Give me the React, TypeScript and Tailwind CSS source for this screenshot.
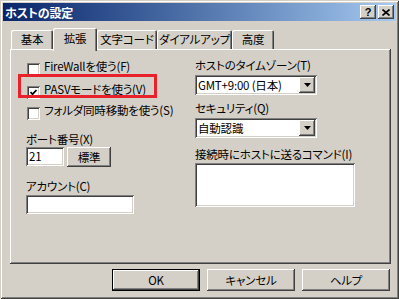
import React from "react";

const sunken =
  "bg-white shadow-[inset_1px_1px_0_#808080,inset_-1px_-1px_0_#fff,inset_2px_2px_0_#404040,inset_-2px_-2px_0_#d4d0c8]";
const raised =
  "bg-[#d4d0c8] shadow-[inset_-1px_-1px_0_#404040,inset_1px_1px_0_#fff,inset_-2px_-2px_0_#808080,inset_2px_2px_0_#d4d0c8]";

function Checkbox({ checked, label }: { checked?: boolean; label: string }) {
  return (
    <div className="flex items-start h-[13px] gap-[4px] ml-[1px]">
      <span className={`w-[13px] h-[13px] shrink-0 flex items-center justify-center ${sunken}`}>
        {checked && (
          <svg width="7" height="7" viewBox="0 0 7 7">
            <path d="M0.5 3 L2.5 5.2 L6.5 1" fill="none" stroke="#000" strokeWidth="1.7" />
          </svg>
        )}
      </span>
      <span className="-mt-[3px] whitespace-nowrap">{label}</span>
    </div>
  );
}

function Combo({ value }: { value: string }) {
  return (
    <div className={`w-[122px] h-[20px] flex items-center pl-[3px] pr-[2px] ${sunken}`}>
      <span className="flex-1 whitespace-nowrap">{value}</span>
      <span className={`w-[16px] h-[16px] flex items-center justify-center ${raised}`}>
        <svg width="7" height="4" viewBox="0 0 7 4">
          <path d="M0 0 H7 L3.5 4 Z" fill="#000" />
        </svg>
      </span>
    </div>
  );
}

function Button({ label, primary }: { label: string; primary?: boolean }) {
  if (primary) {
    return (
      <div className="w-[88px] h-[22px] border border-black flex">
        <div className={`flex-1 flex items-center justify-center ${raised}`}>{label}</div>
      </div>
    );
  }
  return (
    <div className={`w-[88px] h-[22px] flex items-center justify-center ${raised}`}>{label}</div>
  );
}

const tabs = [
  { label: "基本", w: "w-[42px]" },
  { label: "拡張", w: "w-[44px]", active: true },
  { label: "文字コード", w: "w-[60px]" },
  { label: "ダイアルアップ", w: "w-[75px]" },
  { label: "高度", w: "w-[42px]" },
];

export default function App() {
  return (
    <div className="w-[399px] h-[299px] p-[3px] bg-[#d4d0c8] flex flex-col text-black text-[11.5px] leading-[13px] tracking-[-0.2px] font-['Noto_Sans_CJK_JP',sans-serif] [font-feature-settings:'palt'] shadow-[inset_1px_1px_0_#d4d0c8,inset_-1px_-1px_0_#404040,inset_2px_2px_0_#fff,inset_-2px_-2px_0_#808080]">
      {/* title bar */}
      <div className="h-[18px] flex items-center bg-gradient-to-r from-[#0a246a] to-[#a6caf0] pl-[2px] pr-[2px]">
        <span className="text-white font-bold text-[12px]">ホストの設定</span>
        <div className="ml-auto flex gap-[2px]">
          <span className={`w-[16px] h-[14px] flex items-center justify-center font-bold text-[11px] font-['Liberation_Sans',sans-serif] ${raised}`}>
            ?
          </span>
          <span className={`w-[16px] h-[14px] flex items-center justify-center ${raised}`}>
            <svg width="8" height="7" viewBox="0 0 8 7">
              <path d="M0.5 0.5 L7.5 6.5 M7.5 0.5 L0.5 6.5" stroke="#000" strokeWidth="1.6" />
            </svg>
          </span>
        </div>
      </div>

      <div className="flex flex-col pl-[7px] pr-[5px] pt-[7px]">
        {/* tabs */}
        <div className="flex items-end h-[21px] pl-[1px]">
          {tabs.map((t) => (
            <div
              key={t.label}
              className={`${t.w} shrink-0 whitespace-nowrap flex items-center justify-center bg-[#d4d0c8] rounded-t-[2px] shadow-[inset_1px_1px_0_#fff,inset_-1px_0_0_#404040,inset_-2px_0_0_#808080] ${
                t.active ? "h-[23px] -mb-[2px] relative z-10 pb-[3px]" : "h-[19px]"
              }`}
            >
              {t.label}
            </div>
          ))}
        </div>

        {/* panel */}
        <div className="relative h-[215px] flex pl-[16px] shadow-[inset_-1px_-1px_0_#404040,inset_1px_1px_0_#fff,inset_-2px_-2px_0_#808080]">
          <div className="w-[169px] flex flex-col pt-[14px]">
            <Checkbox label="FireWallを使う(F)" />
            <div className="mt-[10px]">
              <Checkbox checked label="PASVモードを使う(V)" />
            </div>
            <div className="mt-[8px]">
              <Checkbox label="フォルダ同時移動を使う(S)" />
            </div>
            <div className="mt-[13px]">ポート番号(X)</div>
            <div className="mt-[1px] flex gap-[3px] h-[20px]">
              <div className={`w-[38px] h-[19px] flex items-center pl-[3px] ${sunken}`}>21</div>
              <div className={`w-[44px] h-[20px] flex items-center justify-center ${raised}`}>標準</div>
            </div>
            <div className="mt-[13px]">アカウント(C)</div>
            <div className={`mt-[2px] w-[108px] h-[19px] ${sunken}`} />
          </div>

          <div className="flex flex-col pt-[10px]">
            <div>ホストのタイムゾーン(T)</div>
            <div className="mt-[3px]">
              <Combo value="GMT+9:00 (日本)" />
            </div>
            <div className="mt-[7px]">セキュリティ(Q)</div>
            <div className="mt-[3px]">
              <Combo value="自動認識" />
            </div>
            <div className="mt-[10px]">接続時にホストに送るコマンド(I)</div>
            <div className={`mt-[2px] w-[160px] h-[44px] ${sunken}`} />
          </div>

          {/* red annotation */}
          <div className="absolute left-[8px] top-[25px] w-[139px] h-[24px] border-[3px] border-[#e8212b]" />
        </div>

        {/* buttons */}
        <div className="mt-[5px] flex justify-end gap-[7px] pr-[1px]">
          <Button primary label="OK" />
          <Button label="キャンセル" />
          <Button label="ヘルプ" />
        </div>
      </div>
    </div>
  );
}
